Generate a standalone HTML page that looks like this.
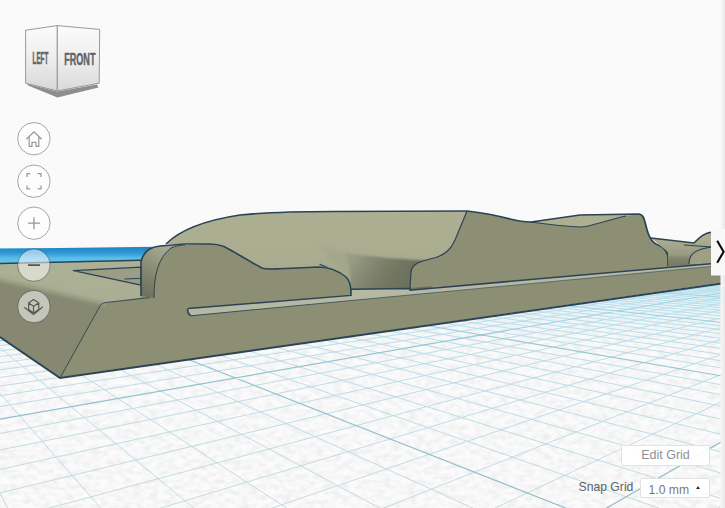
<!DOCTYPE html>
<html><head><meta charset="utf-8">
<style>
html,body{margin:0;padding:0;width:725px;height:508px;overflow:hidden;background:#fafafa;font-family:"Liberation Sans",sans-serif;}
#scene{position:absolute;left:0;top:0;}
.btn{position:absolute;background:rgba(255,255,255,0.92);border:1px solid #e3e3e3;border-radius:2px;color:#777c82;font-size:12.5px;box-sizing:border-box;white-space:nowrap;}
</style></head><body>
<svg id="scene" width="725" height="508" viewBox="0 0 725 508">
<defs>
<linearGradient id="bluestrip" gradientUnits="userSpaceOnUse" x1="0" y1="248" x2="0" y2="261">
<stop offset="0" stop-color="#2387c9"/><stop offset="0.3" stop-color="#2c92d1"/><stop offset="0.5" stop-color="#3aa2da"/><stop offset="0.75" stop-color="#58bbe7"/><stop offset="1" stop-color="#62c2eb"/>
</linearGradient>
<linearGradient id="topface" x1="0" y1="0" x2="0" y2="1"><stop offset="0" stop-color="#acb094"/><stop offset="1" stop-color="#aaae92"/></linearGradient>
<linearGradient id="leftface" gradientUnits="userSpaceOnUse" x1="52" y1="284" x2="49" y2="297"><stop offset="0" stop-color="#abaf93"/><stop offset="0.3" stop-color="#a8ac90"/><stop offset="0.6" stop-color="#989b82"/><stop offset="1" stop-color="#868872" stop-opacity="0"/></linearGradient>
<linearGradient id="rearhump" x1="0" y1="0" x2="0" y2="1"><stop offset="0" stop-color="#adaf93"/><stop offset="0.6" stop-color="#abad91"/><stop offset="1" stop-color="#a3a58a"/></linearGradient>
<linearGradient id="concave" gradientUnits="userSpaceOnUse" x1="352" y1="256" x2="402" y2="288"><stop offset="0" stop-color="#979a82" stop-opacity="0.7"/><stop offset="0.25" stop-color="#8a8d77"/><stop offset="0.65" stop-color="#767964"/><stop offset="1" stop-color="#6c705c"/></linearGradient>
<filter id="blur1" x="-10%" y="-10%" width="120%" height="120%"><feGaussianBlur stdDeviation="1.2"/></filter>
<filter id="blur3" x="-20%" y="-20%" width="140%" height="140%"><feGaussianBlur stdDeviation="2.5"/></filter>
<linearGradient id="channel" gradientUnits="userSpaceOnUse" x1="0" y1="238" x2="0" y2="265"><stop offset="0" stop-color="#adaf93"/><stop offset="0.3" stop-color="#a3a68b"/><stop offset="0.62" stop-color="#979a81"/><stop offset="0.78" stop-color="#80836d"/><stop offset="1" stop-color="#777a65"/></linearGradient>
<linearGradient id="bumpround" gradientUnits="userSpaceOnUse" x1="143" y1="292" x2="168" y2="250"><stop offset="0" stop-color="#6f735e"/><stop offset="0.45" stop-color="#868a73"/><stop offset="1" stop-color="#a6a98e"/></linearGradient>
<linearGradient id="cubeL" x1="0" y1="0" x2="0" y2="1"><stop offset="0" stop-color="#fbfbfb"/><stop offset="0.5" stop-color="#eeeeee"/><stop offset="1" stop-color="#d6d6d6"/></linearGradient>
<filter id="blur05" x="-10%" y="-30%" width="120%" height="160%"><feGaussianBlur stdDeviation="0.6"/></filter>
<linearGradient id="cubeF" x1="0" y1="0" x2="0" y2="1"><stop offset="0" stop-color="#fbfbfb"/><stop offset="0.5" stop-color="#efefef"/><stop offset="1" stop-color="#d9d9d9"/></linearGradient>
<linearGradient id="gminor" gradientUnits="userSpaceOnUse" x1="0" y1="270" x2="0" y2="508"><stop offset="0" stop-color="#9ad4ea"/><stop offset="0.35" stop-color="#b4d9e5"/><stop offset="1" stop-color="#c3d9df"/></linearGradient>
<linearGradient id="gmajor" gradientUnits="userSpaceOnUse" x1="0" y1="270" x2="0" y2="508"><stop offset="0" stop-color="#7cc4e0"/><stop offset="0.4" stop-color="#8cbfcc"/><stop offset="1" stop-color="#90b9c3"/></linearGradient>
<filter id="mottle" x="0" y="0" width="100%" height="100%" filterUnits="objectBoundingBox"><feTurbulence type="fractalNoise" baseFrequency="0.12 0.2" numOctaves="2" seed="7"/><feColorMatrix type="matrix" values="0 0 0 0 0  0 0 0 0 0  0 0 0 0 0  0.12 0 0 0 -0.045"/></filter>
<linearGradient id="panelshadow" x1="0" y1="0" x2="1" y2="0"><stop offset="0" stop-color="#10102a" stop-opacity="0"/><stop offset="1" stop-color="#10102a" stop-opacity="0.07"/></linearGradient>
<linearGradient id="stripbot" gradientUnits="userSpaceOnUse" x1="188" y1="0" x2="725" y2="0"><stop offset="0" stop-color="#2c4354" stop-opacity="0.95"/><stop offset="0.5" stop-color="#2c4354" stop-opacity="0.6"/><stop offset="1" stop-color="#2c4354" stop-opacity="0.45"/></linearGradient>
<linearGradient id="haze" x1="0" y1="0" x2="0" y2="1"><stop offset="0" stop-color="#b4e0f0" stop-opacity="0.55"/><stop offset="0.45" stop-color="#c4e6f2" stop-opacity="0.3"/><stop offset="1" stop-color="#c4e6f2" stop-opacity="0"/></linearGradient>
<linearGradient id="planefade" x1="0" y1="0" x2="0" y2="1"><stop offset="0" stop-color="#f7f7f7" stop-opacity="0.25"/><stop offset="0.55" stop-color="#f7f7f7" stop-opacity="0.05"/><stop offset="1" stop-color="#f7f7f7" stop-opacity="0"/></linearGradient>
<clipPath id="planeclip"><rect x="0" y="248" width="725" height="260"/></clipPath>
</defs>
<rect x="0" y="248" width="725" height="260" fill="#fbfbfb"/>
<rect x="0" y="248" width="725" height="260" fill="#000" filter="url(#mottle)"/>
<g clip-path="url(#planeclip)">
<path d="M53290.6 2256.2L1382.4 239.3M52483.1 2256.2L1376.9 239.2M51675.7 2256.2L1371.4 239.2M50868.2 2256.2L1365.9 239.2M50060.8 2256.2L1360.5 239.1M49253.3 2256.2L1355.2 239.1M48445.9 2256.2L1349.8 239.0M47638.4 2256.2L1344.5 239.0M46831.0 2256.2L1339.3 239.0M45216.1 2256.2L1328.9 238.9M44408.6 2256.2L1323.7 238.9M43601.2 2256.2L1318.6 238.8M42793.7 2256.2L1313.6 238.8M41986.3 2256.2L1308.5 238.7M41178.8 2256.2L1303.5 238.7M40371.4 2256.2L1298.5 238.7M39563.9 2256.2L1293.6 238.6M38756.5 2256.2L1288.7 238.6M37141.6 2256.2L1279.0 238.5M36334.1 2256.2L1274.2 238.5M35526.7 2256.2L1269.4 238.4M34719.2 2256.2L1264.7 238.4M33911.8 2256.2L1260.0 238.4M33104.3 2256.2L1255.3 238.3M32296.9 2256.2L1250.6 238.3M31489.4 2256.2L1246.0 238.3M30682.0 2256.2L1241.4 238.2M29067.1 2256.2L1232.4 238.2M28259.6 2256.2L1227.9 238.1M27452.2 2256.2L1223.4 238.1M26644.7 2256.2L1219.0 238.1M25837.3 2256.2L1214.5 238.0M25029.8 2256.2L1210.2 238.0M24222.3 2256.2L1205.8 238.0M23414.9 2256.2L1201.5 237.9M22607.4 2256.2L1197.2 237.9M20992.5 2256.2L1188.7 237.9M20185.1 2256.2L1184.5 237.8M19377.6 2256.2L1180.3 237.8M18570.2 2256.2L1176.1 237.8M17762.7 2256.2L1172.0 237.7M16955.3 2256.2L1167.9 237.7M16147.8 2256.2L1163.8 237.7M15340.4 2256.2L1159.7 237.6M14532.9 2256.2L1155.7 237.6M12918.0 2256.2L1147.7 237.5M12110.6 2256.2L1143.7 237.5M11303.1 2256.2L1139.8 237.5M10495.7 2256.2L1135.9 237.5M9688.2 2256.2L1132.0 237.4M8880.8 2256.2L1128.1 237.4M8073.3 2256.2L1124.3 237.4M7265.9 2256.2L1120.5 237.3M6458.4 2256.2L1116.7 237.3M4843.5 2256.2L1109.1 237.3M4036.1 2256.2L1105.4 237.2M3228.6 2256.2L1101.7 237.2M2421.2 2256.2L1098.0 237.2M1613.7 2256.2L1094.4 237.2M806.3 2256.2L1090.7 237.1M-1.2 2256.2L1087.1 237.1M-808.6 2256.2L1083.5 237.1M-1616.1 2256.2L1079.9 237.0M-3231.0 2256.2L1072.8 237.0M-4038.5 2256.2L1069.3 237.0M-4845.9 2256.2L1065.8 236.9M-5653.4 2256.2L1062.3 236.9M-6460.8 2256.2L1058.9 236.9M-7268.3 2256.2L1055.4 236.9M-8075.7 2256.2L1052.0 236.8M-8883.2 2256.2L1048.6 236.8M-9690.6 2256.2L1045.3 236.8M-11305.5 2256.2L1038.6 236.7M-12113.0 2256.2L1035.2 236.7M-12920.4 2256.2L1031.9 236.7M-13727.9 2256.2L1028.6 236.7M-14535.3 2256.2L1025.4 236.6M-15342.8 2256.2L1022.1 236.6M-16150.2 2256.2L1018.9 236.6M-16957.7 2256.2L1015.7 236.6M-17765.1 2256.2L1012.5 236.6M-19380.0 2256.2L1006.2 236.5M-20187.5 2256.2L1003.0 236.5M-20994.9 2256.2L999.9 236.5M-21802.4 2256.2L996.8 236.4M-22609.8 2256.2L993.7 236.4M-23417.3 2256.2L990.6 236.4M-24224.7 2256.2L987.6 236.4M-25032.2 2256.2L984.5 236.3M-25839.6 2256.2L981.5 236.3M-27454.5 2256.2L975.5 236.3M-28262.0 2256.2L972.5 236.3M-29069.4 2256.2L969.6 236.2M-29876.9 2256.2L966.6 236.2M-30684.4 2256.2L963.7 236.2M-31491.8 2256.2L960.8 236.2M-32299.3 2256.2L957.9 236.1M-33106.7 2256.2L955.0 236.1M-33914.2 2256.2L952.1 236.1M-35529.1 2256.2L946.4 236.1M-36336.5 2256.2L943.6 236.0M-37144.0 2256.2L940.8 236.0M-37951.4 2256.2L938.0 236.0M-38758.9 2256.2L935.2 236.0M-39566.3 2256.2L932.4 236.0M-40373.8 2256.2L929.7 235.9M-41181.2 2256.2L926.9 235.9M-41988.7 2256.2L924.2 235.9M-43603.6 2256.2L918.8 235.9M-44411.0 2256.2L916.1 235.8M-45218.5 2256.2L913.5 235.8M-46025.9 2256.2L910.8 235.8M-46833.4 2256.2L908.2 235.8M-47640.8 2256.2L905.5 235.8M-48448.3 2256.2L902.9 235.7M-49255.7 2256.2L900.3 235.7M-50063.2 2256.2L897.7 235.7M-51678.1 2256.2L892.6 235.7M-52485.5 2256.2L890.0 235.6M-53293.0 2256.2L887.5 235.6M-54100.4 2256.2L884.9 235.6M-54907.9 2256.2L882.4 235.6M-55715.3 2256.2L879.9 235.6M-56522.8 2256.2L877.4 235.6M-57330.2 2256.2L875.0 235.5M-58137.7 2256.2L872.5 235.5M-59752.6 2256.2L867.6 235.5M-60560.1 2256.2L865.2 235.5M-61367.5 2256.2L862.7 235.4M-62175.0 2256.2L860.3 235.4M-62982.4 2256.2L857.9 235.4M-63789.9 2256.2L855.5 235.4M-64597.3 2256.2L853.2 235.4M-65404.8 2256.2L850.8 235.4M-66212.2 2256.2L848.5 235.3M-67827.1 2256.2L843.8 235.3M-68634.6 2256.2L841.5 235.3M-69442.0 2256.2L839.2 235.3M-70249.5 2256.2L836.9 235.3M-71056.9 2256.2L834.6 235.2M-71864.4 2256.2L832.3 235.2M-72671.8 2256.2L830.0 235.2M-73479.3 2256.2L827.8 235.2M-74286.7 2256.2L825.5 235.2M-70869.4 2123.6L821.1 235.1M-44070.8 1405.3L818.9 235.1M-32000.3 1081.8L816.6 235.1M-25133.7 897.8L814.5 235.1M-20702.3 779.0L812.3 235.1M-17605.9 696.0L810.1 235.1M-15320.2 634.7L807.9 235.0M-13563.6 587.7L805.8 235.0M-12171.5 550.3L803.6 235.0M-10105.0 495.0L799.4 235.0M-9316.9 473.8L797.3 235.0M-8644.5 455.8L795.2 234.9M-8063.9 440.3L793.1 234.9M-7557.5 426.7L791.0 234.9M-7112.0 414.7L788.9 234.9M-6717.1 404.2L786.8 234.9M-6364.5 394.7L784.8 234.9M-6047.8 386.2L782.7 234.9M-5502.2 371.6L778.6 234.8M-5265.6 365.2L776.6 234.8M-5049.0 359.4L774.6 234.8M-4849.9 354.1L772.6 234.8M-4666.4 349.2L770.6 234.8M-4496.7 344.6L768.6 234.7M-4339.2 340.4L766.6 234.7M-4192.8 336.5L764.7 234.7M-4056.2 332.8L762.7 234.7M-3809.0 326.2L758.8 234.7M-3696.7 323.2L756.9 234.7M-3591.1 320.4L754.9 234.6M-3491.7 317.7L753.0 234.6M-3397.8 315.2L751.1 234.6M-3309.0 312.8L749.2 234.6M-3224.9 310.6L747.3 234.6M-3145.2 308.4L745.4 234.6M-3069.5 306.4L743.5 234.6M-2929.0 302.6L739.8 234.5M-2863.8 300.9L737.9 234.5M-2801.5 299.2L736.1 234.5M-2741.9 297.6L734.2 234.5M-2685.0 296.1L732.4 234.5M-2630.6 294.6L730.6 234.5M-2578.4 293.2L728.7 234.5M-2528.4 291.9L726.9 234.4M-2480.4 290.6L725.1 234.4M-2389.9 288.2L721.5 234.4M-2347.3 287.0L719.8 234.4M-2306.2 285.9L718.0 234.4M-2266.7 284.9L716.2 234.4M-2228.5 283.8L714.5 234.3M-2191.7 282.9L712.7 234.3M-2156.2 281.9L711.0 234.3M-2121.9 281.0L709.2 234.3M-2088.8 280.1L707.5 234.3M-2025.7 278.4L704.1 234.3M-1995.7 277.6L702.3 234.3M-1966.6 276.8L700.6 234.2M-1938.4 276.1L698.9 234.2M-1911.1 275.3L697.3 234.2M-1884.6 274.6L695.6 234.2M-1858.9 273.9L693.9 234.2M-1833.9 273.3L692.2 234.2M-1809.7 272.6L690.6 234.2M-1763.2 271.4L687.3 234.1M-1740.9 270.8L685.6 234.1M-1719.2 270.2L684.0 234.1M-1698.1 269.6L682.3 234.1M-1677.6 269.1L680.7 234.1M-1657.6 268.5L679.1 234.1M-1638.1 268.0L677.5 234.1M-1619.1 267.5L675.9 234.1M-1600.6 267.0L674.3 234.1M-1565.0 266.1L671.1 234.0M-1547.8 265.6L669.5 234.0M-1531.0 265.1L667.9 234.0M-1514.6 264.7L666.4 234.0M-1498.6 264.3L664.8 234.0M-1483.0 263.9L663.3 234.0M-1467.8 263.5L661.7 234.0M-1452.8 263.1L660.2 233.9M-1438.2 262.7L658.6 233.9M-1410.0 261.9L655.6 233.9M-1396.4 261.5L654.0 233.9M-1383.0 261.2L652.5 233.9M-1369.9 260.8L651.0 233.9M-1357.1 260.5L649.5 233.9M-1344.6 260.2L648.0 233.9M-1332.3 259.8L646.5 233.8M-1320.2 259.5L645.0 233.8M-1308.5 259.2L643.6 233.8M-1285.6 258.6L640.6 233.8M-1274.4 258.3L639.2 233.8M-1263.5 258.0L637.7 233.8M-1252.9 257.7L636.2 233.8M-1242.4 257.4L634.8 233.8M-1232.1 257.1L633.3 233.8M-1222.0 256.9L631.9 233.7M-1212.1 256.6L630.5 233.7M-1202.3 256.3L629.0 233.7M-1183.4 255.8L626.2 233.7M-1174.2 255.6L624.8 233.7M-1165.1 255.3L623.4 233.7M-1156.2 255.1L622.0 233.7M-1147.5 254.9L620.6 233.7M-1138.9 254.6L619.2 233.6M-1130.4 254.4L617.8 233.6M-1122.1 254.2L616.4 233.6M-1114.0 254.0L615.1 233.6M-1098.0 253.5L612.3 233.6M-1090.3 253.3L611.0 233.6M-1082.6 253.1L609.6 233.6M-1075.1 252.9L608.3 233.6M-1067.7 252.7L606.9 233.6M-1060.4 252.5L605.6 233.5M-1053.2 252.3L604.2 233.5M-1046.2 252.2L602.9 233.5M-1039.2 252.0L601.6 233.5M-1025.6 251.6L598.9 233.5M-1019.0 251.4L597.6 233.5M-1012.4 251.3L596.3 233.5M-1006.0 251.1L595.0 233.5M-999.7 250.9L593.7 233.5M-993.4 250.7L592.4 233.4M-987.2 250.6L591.1 233.4M-981.2 250.4L589.8 233.4M-975.2 250.3L588.5 233.4M-963.5 249.9L586.0 233.4M-957.7 249.8L584.7 233.4M-952.1 249.6L583.5 233.4M-946.5 249.5L582.2 233.4M-941.0 249.3L581.0 233.4M-935.5 249.2L579.7 233.4M-930.2 249.0L578.5 233.3M-924.9 248.9L577.2 233.3M-919.7 248.8L576.0 233.3M-909.5 248.5L573.5 233.3M-904.5 248.4L572.3 233.3M-899.5 248.2L571.1 233.3M-894.6 248.1L569.8 233.3M-889.8 248.0L568.6 233.3M-885.1 247.8L567.4 233.3M-880.4 247.7L566.2 233.3M-875.7 247.6L565.0 233.2M-871.2 247.5L563.8 233.2M-862.2 247.2L561.4 233.2M-857.8 247.1L560.3 233.2M-853.4 247.0L559.1 233.2M-849.1 246.9L557.9 233.2M-844.9 246.8L556.7 233.2M-840.7 246.6L555.6 233.2M-836.5 246.5L554.4 233.2M-832.4 246.4L553.2 233.2M-828.4 246.3L552.1 233.1M-820.4 246.1L549.8 233.1M-816.5 246.0L548.6 233.1M-812.6 245.9L547.5 233.1M-808.8 245.8L546.3 233.1M-805.0 245.7L545.2 233.1M-801.3 245.6L544.1 233.1M-797.6 245.5L543.0 233.1M-793.9 245.4L541.8 233.1M-790.3 245.3L540.7 233.1M-783.2 245.1L538.5 233.0M-779.7 245.0L537.4 233.0M-776.3 244.9L536.3 233.0M-772.8 244.8L535.2 233.0M-769.5 244.7L534.1 233.0M-766.1 244.6L533.0 233.0M-762.8 244.6L531.9 233.0M-759.5 244.5L530.8 233.0M-756.3 244.4L529.7 233.0M-749.9 244.2L527.6 233.0M-746.8 244.1L526.5 233.0M-743.7 244.0L525.4 233.0M-740.6 244.0L524.3 232.9M-737.5 243.9L523.3 232.9M-734.5 243.8L522.2 232.9M-731.5 243.7L521.2 232.9M-728.6 243.6L520.1 232.9M-725.7 243.6L519.1 232.9M-719.9 243.4L517.0 232.9M-717.1 243.3L515.9 232.9M-714.3 243.3L514.9 232.9M-711.5 243.2L513.9 232.9M-708.7 243.1L512.8 232.9M-706.0 243.0L511.8 232.9M-703.3 243.0L510.8 232.8M-700.6 242.9L509.8 232.8M-698.0 242.8L508.7 232.8M-692.7 242.7L506.7 232.8M-690.2 242.6L505.7 232.8M-687.6 242.5L504.7 232.8M-685.1 242.5L503.7 232.8M-682.6 242.4L502.7 232.8M-680.1 242.3L501.7 232.8M-677.6 242.3L500.7 232.8M-675.2 242.2L499.7 232.8M-672.8 242.1L498.7 232.8M-668.0 242.0L496.8 232.7M-665.7 242.0L495.8 232.7M-663.4 241.9L494.8 232.7M-661.1 241.8L493.8 232.7M-658.8 241.8L492.9 232.7M-656.5 241.7L491.9 232.7M-654.2 241.6L490.9 232.7M-652.0 241.6L490.0 232.7M-649.8 241.5L489.0 232.7M-645.5 241.4L487.1 232.7M-643.3 241.4L486.2 232.7M-641.2 241.3L485.2 232.7M-639.1 241.2L484.3 232.6M-637.0 241.2L483.3 232.6M-634.9 241.1L482.4 232.6M-632.8 241.1L481.5 232.6M-630.8 241.0L480.5 232.6M-628.7 241.0L479.6 232.6M-624.7 240.9L477.8 232.6M-622.8 240.8L476.8 232.6M-620.8 240.8L475.9 232.6M-618.9 240.7L475.0 232.6M-616.9 240.6L474.1 232.6M-615.0 240.6L473.2 232.6M-613.1 240.5L472.3 232.6M-611.2 240.5L471.4 232.6M-609.4 240.4L470.5 232.5M-605.7 240.3L468.7 232.5M-603.9 240.3L467.8 232.5M-602.0 240.3L466.9 232.5M-600.3 240.2L466.0 232.5M-598.5 240.2L465.1 232.5M-596.7 240.1L464.2 232.5M-595.0 240.1L463.3 232.5M-593.2 240.0L462.5 232.5M-591.5 240.0L461.6 232.5M-588.1 239.9L459.8 232.5M-586.4 239.8L459.0 232.5M-584.7 239.8L458.1 232.5M-583.1 239.7L457.2 232.4M-581.4 239.7L456.4 232.4M-579.8 239.7L455.5 232.4M-578.1 239.6L454.7 232.4M-576.5 239.6L453.8 232.4M-574.9 239.5L453.0 232.4M-571.8 239.4L451.3 232.4M-570.2 239.4L450.4 232.4M-568.6 239.4L449.6 232.4M-567.1 239.3L448.7 232.4M-565.6 239.3L447.9 232.4M-564.0 239.2L447.1 232.4M-562.5 239.2L446.2 232.4M-561.0 239.2L445.4 232.4M-559.6 239.1L444.6 232.4M-556.6 239.0L442.9 232.3M-555.2 239.0L442.1 232.3M-553.7 239.0L441.3 232.3M-552.3 238.9L440.5 232.3M-550.8 238.9L439.7 232.3M-549.4 238.8L438.9 232.3M-548.0 238.8L438.0 232.3M-546.6 238.8L437.2 232.3M-545.2 238.7L436.4 232.3M-542.5 238.7L434.8 232.3M-541.1 238.6L434.0 232.3M-539.8 238.6L433.2 232.3M-538.4 238.5L432.4 232.3M-537.1 238.5L431.7 232.3M-535.8 238.5L430.9 232.3M-534.5 238.4L430.1 232.2M-533.2 238.4L429.3 232.2M-531.9 238.4L428.5 232.2M-529.3 238.3L426.9 232.2M-528.0 238.3L426.2 232.2M-526.8 238.2L425.4 232.2M-525.5 238.2L424.6 232.2M-524.3 238.2L423.9 232.2M-523.1 238.1L423.1 232.2M-521.8 238.1L422.3 232.2M-520.6 238.1L421.6 232.2M-519.4 238.0L420.8 232.2M-517.0 238.0L419.3 232.2M-515.8 237.9L418.5 232.2M-514.6 237.9L417.8 232.2M-513.4 237.9L417.0 232.2M-512.3 237.8L416.3 232.1M-511.1 237.8L415.5 232.1M-510.0 237.8L414.8 232.1M-508.8 237.8L414.0 232.1M-507.7 237.7L413.3 232.1M-75141.7 2256.2L-502.4 237.7M-74468.2 2256.2L-498.3 237.6M-73794.7 2256.2L-494.2 237.6M-73121.2 2256.2L-490.1 237.6M-72447.8 2256.2L-486.0 237.6M-71774.3 2256.2L-482.0 237.5M-71100.8 2256.2L-478.0 237.5M-70427.3 2256.2L-474.0 237.5M-69753.8 2256.2L-470.0 237.5M-68406.9 2256.2L-462.1 237.4M-67733.4 2256.2L-458.2 237.4M-67059.9 2256.2L-454.3 237.4M-66386.5 2256.2L-450.4 237.3M-65713.0 2256.2L-446.5 237.3M-65039.5 2256.2L-442.7 237.3M-64366.0 2256.2L-438.8 237.3M-63692.6 2256.2L-435.0 237.3M-63019.1 2256.2L-431.3 237.2M-61672.1 2256.2L-423.7 237.2M-60998.7 2256.2L-420.0 237.2M-60325.2 2256.2L-416.3 237.1M-59651.7 2256.2L-412.6 237.1M-58978.2 2256.2L-408.9 237.1M-58304.8 2256.2L-405.3 237.1M-57631.3 2256.2L-401.6 237.1M-56957.8 2256.2L-398.0 237.0M-56284.3 2256.2L-394.4 237.0M-54937.4 2256.2L-387.3 237.0M-54263.9 2256.2L-383.7 236.9M-53590.4 2256.2L-380.2 236.9M-52917.0 2256.2L-376.7 236.9M-52243.5 2256.2L-373.1 236.9M-51570.0 2256.2L-369.7 236.9M-50896.5 2256.2L-366.2 236.8M-50223.1 2256.2L-362.7 236.8M-49549.6 2256.2L-359.3 236.8M-48202.6 2256.2L-352.5 236.8M-47529.2 2256.2L-349.1 236.7M-46855.7 2256.2L-345.7 236.7M-46182.2 2256.2L-342.4 236.7M-45508.7 2256.2L-339.0 236.7M-44835.3 2256.2L-335.7 236.7M-44161.8 2256.2L-332.4 236.6M-43488.3 2256.2L-329.1 236.6M-42814.8 2256.2L-325.8 236.6M-41467.9 2256.2L-319.3 236.6M-40794.4 2256.2L-316.1 236.5M-40120.9 2256.2L-312.9 236.5M-39447.5 2256.2L-309.7 236.5M-38774.0 2256.2L-306.5 236.5M-38100.5 2256.2L-303.3 236.5M-37427.0 2256.2L-300.1 236.4M-36753.6 2256.2L-297.0 236.4M-36080.1 2256.2L-293.8 236.4M-34733.1 2256.2L-287.6 236.4M-34059.6 2256.2L-284.5 236.3M-33386.2 2256.2L-281.5 236.3M-32712.7 2256.2L-278.4 236.3M-32039.2 2256.2L-275.3 236.3M-31365.7 2256.2L-272.3 236.3M-30692.3 2256.2L-269.3 236.3M-30018.8 2256.2L-266.3 236.2M-29345.3 2256.2L-263.3 236.2M-27998.4 2256.2L-257.3 236.2M-27324.9 2256.2L-254.4 236.2M-26651.4 2256.2L-251.4 236.1M-25977.9 2256.2L-248.5 236.1M-25304.5 2256.2L-245.6 236.1M-24631.0 2256.2L-242.7 236.1M-23957.5 2256.2L-239.8 236.1M-23284.0 2256.2L-236.9 236.1M-22610.6 2256.2L-234.0 236.0M-21263.6 2256.2L-228.3 236.0M-20590.1 2256.2L-225.5 236.0M-19916.7 2256.2L-222.7 236.0M-19243.2 2256.2L-219.9 236.0M-18569.7 2256.2L-217.1 235.9M-17896.2 2256.2L-214.3 235.9M-17222.8 2256.2L-211.5 235.9M-16549.3 2256.2L-208.8 235.9M-15875.8 2256.2L-206.0 235.9M-14528.9 2256.2L-200.6 235.8M-13855.4 2256.2L-197.9 235.8M-13181.9 2256.2L-195.2 235.8M-12508.4 2256.2L-192.5 235.8M-11835.0 2256.2L-189.8 235.8M-11161.5 2256.2L-187.1 235.8M-10488.0 2256.2L-184.5 235.7M-9814.5 2256.2L-181.8 235.7M-9141.1 2256.2L-179.2 235.7M-7794.1 2256.2L-173.9 235.7M-7120.6 2256.2L-171.3 235.7M-6447.2 2256.2L-168.7 235.6M-5773.7 2256.2L-166.2 235.6M-5100.2 2256.2L-163.6 235.6M-4426.7 2256.2L-161.0 235.6M-3753.3 2256.2L-158.5 235.6M-3079.8 2256.2L-155.9 235.6M-2406.3 2256.2L-153.4 235.5M-1059.3 2256.2L-148.4 235.5M-385.9 2256.2L-145.9 235.5M287.6 2256.2L-143.4 235.5M961.1 2256.2L-140.9 235.5M1634.6 2256.2L-138.5 235.5M2308.0 2256.2L-136.0 235.4M2981.5 2256.2L-133.5 235.4M3655.0 2256.2L-131.1 235.4M4328.5 2256.2L-128.7 235.4M5675.4 2256.2L-123.8 235.4M6348.9 2256.2L-121.4 235.4M7022.4 2256.2L-119.1 235.3M7695.8 2256.2L-116.7 235.3M8369.3 2256.2L-114.3 235.3M9042.8 2256.2L-111.9 235.3M9716.3 2256.2L-109.6 235.3M10389.7 2256.2L-107.2 235.3M11063.2 2256.2L-104.9 235.3M12410.2 2256.2L-100.3 235.2M13083.6 2256.2L-98.0 235.2M13757.1 2256.2L-95.7 235.2M14430.6 2256.2L-93.4 235.2M15104.1 2256.2L-91.1 235.2M15777.5 2256.2L-88.8 235.2M16451.0 2256.2L-86.5 235.1M17124.5 2256.2L-84.3 235.1M17798.0 2256.2L-82.0 235.1M19144.9 2256.2L-77.6 235.1M19818.4 2256.2L-75.3 235.1M20491.9 2256.2L-73.1 235.1M21165.3 2256.2L-70.9 235.0M21838.8 2256.2L-68.7 235.0M22512.3 2256.2L-66.5 235.0M23185.8 2256.2L-64.4 235.0M23859.2 2256.2L-62.2 235.0M24532.7 2256.2L-60.0 235.0M25879.7 2256.2L-55.7 235.0M26553.1 2256.2L-53.6 234.9M27226.6 2256.2L-51.5 234.9M27900.1 2256.2L-49.3 234.9M28573.6 2256.2L-47.2 234.9M29247.0 2256.2L-45.1 234.9M29920.5 2256.2L-43.0 234.9M30594.0 2256.2L-40.9 234.9M31267.5 2256.2L-38.8 234.9M32614.4 2256.2L-34.7 234.8M33287.9 2256.2L-32.6 234.8M33961.4 2256.2L-30.6 234.8M34634.9 2256.2L-28.5 234.8M35308.3 2256.2L-26.5 234.8M35981.8 2256.2L-24.4 234.8M36655.3 2256.2L-22.4 234.8M37328.8 2256.2L-20.4 234.7M38002.2 2256.2L-18.4 234.7M39349.2 2256.2L-14.4 234.7M40022.7 2256.2L-12.4 234.7M40696.1 2256.2L-10.4 234.7M41369.6 2256.2L-8.5 234.7M42043.1 2256.2L-6.5 234.7M42716.6 2256.2L-4.5 234.6M43390.0 2256.2L-2.6 234.6M44063.5 2256.2L-0.6 234.6M44737.0 2256.2L1.3 234.6M46083.9 2256.2L5.2 234.6M46757.4 2256.2L7.1 234.6M47430.9 2256.2L9.0 234.6M48104.4 2256.2L10.9 234.6M48777.8 2256.2L12.8 234.5M49451.3 2256.2L14.7 234.5M50124.8 2256.2L16.6 234.5M50798.3 2256.2L18.5 234.5M51471.7 2256.2L20.3 234.5M52818.7 2256.2L24.1 234.5M53492.2 2256.2L25.9 234.5M51351.9 2151.1L27.8 234.5M34239.8 1496.3L29.6 234.4M25820.5 1174.2L31.4 234.4M20811.8 982.5L33.3 234.4M17490.3 855.5L35.1 234.4M15126.5 765.0L36.9 234.4M13358.2 697.3L38.7 234.4M10889.5 602.9L42.3 234.4M9993.7 568.6L44.1 234.4M9247.9 540.1L45.9 234.3M8617.5 516.0L47.7 234.3M8077.6 495.3L49.4 234.3M7609.9 477.4L51.2 234.3M7200.9 461.7L53.0 234.3M6840.2 447.9L54.7 234.3M6519.8 435.7L56.5 234.3M5975.3 414.9L59.9 234.3M5742.0 405.9L61.7 234.2M5530.1 397.8L63.4 234.2M5336.6 390.4L65.1 234.2M5159.3 383.6L66.8 234.2M4996.2 377.4L68.5 234.2M4845.6 371.6L70.2 234.2M4706.3 366.3L71.9 234.2M4576.9 361.3L73.6 234.2M4344.1 352.4L77.0 234.2M4239.0 348.4L78.7 234.1M4140.4 344.6L80.3 234.1M4047.9 341.1L82.0 234.1M3960.8 337.8L83.6 234.1M3878.7 334.6L85.3 234.1M3801.1 331.7L86.9 234.1M3727.8 328.9L88.6 234.1M3658.3 326.2L90.2 234.1M3529.8 321.3L93.5 234.1M3470.2 319.0L95.1 234.0M3413.5 316.8L96.7 234.0M3359.5 314.8L98.3 234.0M3307.9 312.8L99.9 234.0M3258.5 310.9L101.5 234.0M3211.4 309.1L103.1 234.0M3166.2 307.4L104.7 234.0M3123.0 305.7L106.3 234.0M3041.6 302.6L109.4 234.0M3003.3 301.1L111.0 233.9M2966.5 299.7L112.6 233.9M2931.1 298.4L114.1 233.9M2897.0 297.1L115.7 233.9M2864.2 295.8L117.2 233.9M2832.5 294.6L118.8 233.9M2801.9 293.4L120.3 233.9M2772.4 292.3L121.8 233.9M2716.3 290.2L124.9 233.9M2689.7 289.1L126.4 233.9M2663.9 288.1L127.9 233.8M2638.9 287.2L129.4 233.8M2614.7 286.3L130.9 233.8M2591.3 285.4L132.4 233.8M2568.5 284.5L133.9 233.8M2546.5 283.7L135.4 233.8M2525.1 282.8L136.9 233.8M2484.1 281.3L139.9 233.8M2464.5 280.5L141.4 233.8M2445.4 279.8L142.8 233.8M2426.8 279.1L144.3 233.7M2408.8 278.4L145.7 233.7M2391.2 277.7L147.2 233.7M2374.1 277.1L148.7 233.7M2357.4 276.4L150.1 233.7M2341.2 275.8L151.5 233.7M2309.9 274.6L154.4 233.7M2294.9 274.0L155.8 233.7M2280.2 273.5L157.3 233.7M2265.9 272.9L158.7 233.7M2251.9 272.4L160.1 233.6M2238.2 271.9L161.5 233.6M2224.9 271.3L162.9 233.6M2211.9 270.9L164.3 233.6M2199.1 270.4L165.7 233.6M2174.5 269.4L168.5 233.6M2162.6 269.0L169.9 233.6M2151.0 268.5L171.3 233.6M2139.6 268.1L172.6 233.6M2128.4 267.7L174.0 233.6M2117.5 267.2L175.4 233.6M2106.8 266.8L176.8 233.5M2096.3 266.4L178.1 233.5M2086.1 266.0L179.5 233.5M2066.2 265.3L182.2 233.5M2056.5 264.9L183.5 233.5M2047.1 264.5L184.9 233.5M2037.8 264.2L186.2 233.5M2028.7 263.8L187.5 233.5M2019.8 263.5L188.9 233.5M2011.0 263.2L190.2 233.5M2002.4 262.8L191.5 233.5M1994.0 262.5L192.8 233.5M1977.6 261.9L195.4 233.4M1969.6 261.6L196.8 233.4M1961.8 261.3L198.1 233.4M1954.1 261.0L199.4 233.4M1946.5 260.7L200.6 233.4M1939.1 260.4L201.9 233.4M1931.8 260.1L203.2 233.4M1924.6 259.9L204.5 233.4M1917.5 259.6L205.8 233.4M1903.7 259.1L208.3 233.4M1897.0 258.8L209.6 233.3M1890.4 258.6L210.9 233.3M1883.9 258.3L212.1 233.3M1877.5 258.1L213.4 233.3M1871.3 257.8L214.6 233.3M1865.1 257.6L215.9 233.3M1859.0 257.3L217.1 233.3M1853.0 257.1L218.4 233.3M1841.3 256.7L220.9 233.3M1835.6 256.5L222.1 233.3M1829.9 256.2L223.3 233.3M1824.4 256.0L224.6 233.3M1818.9 255.8L225.8 233.3M1813.5 255.6L227.0 233.2M1808.2 255.4L228.2 233.2M1803.0 255.2L229.4 233.2M1797.8 255.0L230.6 233.2M1787.7 254.6L233.0 233.2M1782.8 254.4L234.2 233.2M1777.9 254.2L235.4 233.2M1773.1 254.1L236.6 233.2M1768.4 253.9L237.8 233.2M1763.7 253.7L239.0 233.2M1759.1 253.5L240.2 233.2M1754.6 253.4L241.4 233.2M1750.1 253.2L242.5 233.1M1741.3 252.8L244.9 233.1M1737.0 252.7L246.0 233.1M1732.8 252.5L247.2 233.1M1728.6 252.4L248.4 233.1M1724.5 252.2L249.5 233.1M1720.4 252.0L250.7 233.1M1716.3 251.9L251.8 233.1M1712.4 251.7L253.0 233.1M1708.4 251.6L254.1 233.1M1700.7 251.3L256.4 233.1M1696.9 251.1L257.5 233.1M1693.2 251.0L258.7 233.1M1689.5 250.9L259.8 233.0M1685.9 250.7L260.9 233.0M1682.3 250.6L262.0 233.0M1678.7 250.4L263.2 233.0M1675.2 250.3L264.3 233.0M1671.7 250.2L265.4 233.0M1664.9 249.9L267.6 233.0M1661.6 249.8L268.7 233.0M1658.2 249.7L269.8 233.0M1655.0 249.5L270.9 233.0M1651.7 249.4L272.0 233.0M1648.5 249.3L273.1 233.0M1645.4 249.2L274.2 233.0M1642.2 249.1L275.3 233.0M1639.2 248.9L276.4 232.9M1633.1 248.7L278.5 232.9M1630.1 248.6L279.6 232.9M1627.1 248.5L280.7 232.9M1624.2 248.4L281.7 232.9M1621.3 248.3L282.8 232.9M1618.4 248.1L283.9 232.9M1615.6 248.0L284.9 232.9M1612.8 247.9L286.0 232.9M1610.0 247.8L287.0 232.9M1604.6 247.6L289.2 232.9M1601.9 247.5L290.2 232.9M1599.2 247.4L291.2 232.9M1596.6 247.3L292.3 232.8M1594.0 247.2L293.3 232.8M1591.4 247.1L294.4 232.8M1588.9 247.0L295.4 232.8M1586.4 246.9L296.4 232.8M1583.9 246.8L297.5 232.8M1578.9 246.6L299.5 232.8M1576.5 246.5L300.5 232.8M1574.1 246.4L301.5 232.8M1571.7 246.4L302.6 232.8M1569.4 246.3L303.6 232.8M1567.1 246.2L304.6 232.8M1564.8 246.1L305.6 232.8M1562.5 246.0L306.6 232.8M1560.2 245.9L307.6 232.8M1555.8 245.7L309.6 232.7M1553.6 245.7L310.6 232.7M1551.4 245.6L311.6 232.7M1549.2 245.5L312.6 232.7M1547.1 245.4L313.6 232.7M1545.0 245.3L314.5 232.7M1542.9 245.3L315.5 232.7M1540.8 245.2L316.5 232.7M1538.7 245.1L317.5 232.7M1534.7 244.9L319.4 232.7M1532.7 244.9L320.4 232.7M1530.7 244.8L321.4 232.7M1528.7 244.7L322.3 232.7M1526.8 244.6L323.3 232.7M1524.8 244.6L324.3 232.7M1522.9 244.5L325.2 232.6M1521.0 244.4L326.2 232.6M1519.1 244.3L327.1 232.6M1515.4 244.2L329.0 232.6M1513.6 244.1L330.0 232.6M1511.8 244.1L330.9 232.6M1510.0 244.0L331.9 232.6M1508.2 243.9L332.8 232.6M1506.4 243.9L333.7 232.6M1504.6 243.8L334.7 232.6M1502.9 243.7L335.6 232.6M1501.2 243.7L336.5 232.6M1497.8 243.5L338.4 232.6M1496.1 243.5L339.3 232.6M1494.4 243.4L340.2 232.6M1492.8 243.3L341.1 232.6M1491.1 243.3L342.1 232.5M1489.5 243.2L343.0 232.5M1487.9 243.1L343.9 232.5M1486.3 243.1L344.8 232.5M1484.7 243.0L345.7 232.5M1481.5 242.9L347.5 232.5M1480.0 242.8L348.4 232.5M1478.4 242.8L349.3 232.5M1476.9 242.7L350.2 232.5M1475.4 242.7L351.1 232.5M1473.9 242.6L352.0 232.5M1472.4 242.6L352.9 232.5M1470.9 242.5L353.8 232.5M1469.5 242.4L354.7 232.5M1466.5 242.3L356.4 232.5M1465.1 242.3L357.3 232.5M1463.7 242.2L358.2 232.4M1462.3 242.2L359.1 232.4M1460.9 242.1L359.9 232.4M1459.5 242.1L360.8 232.4M1458.1 242.0L361.7 232.4M1456.7 242.0L362.5 232.4M1455.4 241.9L363.4 232.4M1452.7 241.8L365.1 232.4M1451.3 241.7L366.0 232.4M1450.0 241.7L366.8 232.4M1448.7 241.6L367.7 232.4M1447.4 241.6L368.5 232.4M1446.1 241.5L369.4 232.4M1444.8 241.5L370.2 232.4M1443.6 241.5L371.1 232.4M1442.3 241.4L371.9 232.4M1439.8 241.3L373.6 232.4M1438.5 241.3L374.5 232.3M1437.3 241.2L375.3 232.3M1436.1 241.2L376.1 232.3M1434.9 241.1L377.0 232.3M1433.7 241.1L377.8 232.3M1432.5 241.0L378.6 232.3M1431.3 241.0L379.5 232.3M1430.1 240.9L380.3 232.3M1427.8 240.8L381.9 232.3M1426.6 240.8L382.7 232.3M1425.5 240.8L383.6 232.3M1424.4 240.7L384.4 232.3M1423.2 240.7L385.2 232.3M1422.1 240.6L386.0 232.3M1421.0 240.6L386.8 232.3M1419.9 240.5L387.6 232.3M1418.8 240.5L388.4 232.3M1416.6 240.4L390.0 232.3M1415.5 240.4L390.8 232.3M1414.4 240.3L391.6 232.2M1413.4 240.3L392.4 232.2M1412.3 240.3L393.2 232.2M1411.3 240.2L394.0 232.2M1410.2 240.2L394.8 232.2M1409.2 240.1L395.6 232.2M1408.2 240.1L396.4 232.2M1406.1 240.0L398.0 232.2M1405.1 240.0L398.7 232.2M1404.1 239.9L399.5 232.2M1403.1 239.9L400.3 232.2M1402.1 239.9L401.1 232.2M1401.1 239.8L401.9 232.2M1400.2 239.8L402.6 232.2M1399.2 239.8L403.4 232.2M1398.2 239.7L404.2 232.2M1396.3 239.6L405.7 232.2M1395.4 239.6L406.5 232.2M1394.4 239.6L407.2 232.2M1393.5 239.5L408.0 232.1M1392.5 239.5L408.8 232.1M1391.6 239.5L409.5 232.1M1390.7 239.4L410.3 232.1M1389.8 239.4L411.0 232.1M1388.9 239.4L411.8 232.1" stroke="url(#gminor)" stroke-width="0.95" fill="none"/>
<path d="M54098.1 2256.2L1388.0 239.3M46023.5 2256.2L1334.1 238.9M37949.0 2256.2L1283.8 238.6M29874.5 2256.2L1236.9 238.2M21800.0 2256.2L1192.9 237.9M13725.5 2256.2L1151.7 237.6M5651.0 2256.2L1112.9 237.3M-2423.5 2256.2L1076.4 237.0M-10498.1 2256.2L1041.9 236.8M-18572.6 2256.2L1009.3 236.5M-26647.1 2256.2L978.5 236.3M-34721.6 2256.2L949.3 236.1M-42796.1 2256.2L921.5 235.9M-50870.6 2256.2L895.1 235.7M-58945.2 2256.2L870.0 235.5M-67019.7 2256.2L846.1 235.3M-75094.2 2256.2L823.3 235.2M-11041.1 520.1L801.5 235.0M-5761.8 378.5L780.7 234.8M-3928.6 329.4L760.7 234.7M-2997.6 304.5L741.6 234.6M-2434.2 289.4L723.3 234.4M-2056.7 279.2L705.8 234.3M-1786.1 272.0L688.9 234.2M-1582.6 266.5L672.7 234.0M-1424.0 262.3L657.1 233.9M-1296.9 258.9L642.1 233.8M-1192.8 256.1L627.6 233.7M-1105.9 253.8L613.7 233.6M-1032.4 251.8L600.2 233.5M-969.3 250.1L587.3 233.4M-914.6 248.6L574.7 233.3M-866.6 247.3L562.6 233.2M-824.4 246.2L550.9 233.1M-786.8 245.2L539.6 233.1M-753.1 244.3L528.6 233.0M-722.8 243.5L518.0 232.9M-695.3 242.8L507.7 232.8M-670.4 242.1L497.7 232.7M-647.6 241.5L488.1 232.7M-626.7 240.9L478.7 232.6M-607.5 240.4L469.6 232.5M-589.8 239.9L460.7 232.5M-573.3 239.5L452.1 232.4M-558.1 239.1L443.8 232.3M-543.9 238.7L435.6 232.3M-530.6 238.3L427.7 232.2M-518.2 238.0L420.0 232.2M-506.5 237.7L412.5 232.1M-75815.1 2256.2L-506.5 237.7M-69080.4 2256.2L-466.0 237.4M-62345.6 2256.2L-427.5 237.2M-55610.9 2256.2L-390.8 237.0M-48876.1 2256.2L-355.9 236.8M-42141.4 2256.2L-322.6 236.6M-35406.6 2256.2L-290.7 236.4M-28671.8 2256.2L-260.3 236.2M-21937.1 2256.2L-231.2 236.0M-15202.3 2256.2L-203.3 235.9M-8467.6 2256.2L-176.6 235.7M-1732.8 2256.2L-150.9 235.5M5001.9 2256.2L-126.3 235.4M11736.7 2256.2L-102.6 235.2M18471.4 2256.2L-79.8 235.1M25206.2 2256.2L-57.9 235.0M31941.0 2256.2L-36.8 234.8M38675.7 2256.2L-16.4 234.7M45410.5 2256.2L3.2 234.6M52145.2 2256.2L22.2 234.5M11985.7 644.8L40.5 234.4M6233.1 424.7L58.2 234.3M4456.5 356.7L75.3 234.2M3592.4 323.7L91.8 234.1M3081.5 304.1L107.9 234.0M2743.9 291.2L123.4 233.9M2504.3 282.0L138.4 233.8M2325.4 275.2L153.0 233.7M2186.7 269.9L167.1 233.6M2076.0 265.7L180.8 233.5M1985.7 262.2L194.1 233.4M1910.6 259.3L207.1 233.4M1847.1 256.9L219.6 233.3M1792.7 254.8L231.8 233.2M1745.7 253.0L243.7 233.1M1704.6 251.4L255.3 233.1M1668.3 250.1L266.5 233.0M1636.1 248.8L277.4 232.9M1607.3 247.7L288.1 232.9M1581.4 246.7L298.5 232.8M1558.0 245.8L308.6 232.7M1536.7 245.0L318.5 232.7M1517.3 244.3L328.1 232.6M1499.5 243.6L337.5 232.6M1483.1 243.0L346.6 232.5M1468.0 242.4L355.5 232.5M1454.0 241.9L364.3 232.4M1441.0 241.4L372.8 232.4M1429.0 240.9L381.1 232.3M1417.7 240.5L389.2 232.3M1407.1 240.1L397.2 232.2M1397.3 239.7L404.9 232.2M1388.0 239.3L412.5 232.1" stroke="url(#gmajor)" stroke-width="1.15" fill="none"/>
<rect x="0" y="248" width="725" height="260" fill="url(#planefade)"/>
<rect x="0" y="268" width="725" height="80" fill="url(#haze)"/>
</g>
<polygon points="0,248.8 175,246.6 175,266 0,266" fill="url(#bluestrip)"/>
<polygon points="0,263.5 141,260.3 725,247 725,282 60,378 0,337" fill="#8d8f75"/>
<polygon points="0,263.5 141,260.3 141,297.5 106,302.5 60,289 0,275" fill="url(#topface)"/>
<polygon points="0,275 60,289 106,302.5 100,306 60,378 0,337" fill="#868872"/>
<polygon points="0,272 60,286 106,300 106,312 60,300 0,288" fill="url(#leftface)"/>
<polygon points="73.4,270.7 141,267.2 141,285.2" fill="#9b9e84" stroke="#2c4354" stroke-width="1.3" stroke-linejoin="round"/>
<line x1="124.5" y1="279" x2="141" y2="278.3" stroke="#2c4354" stroke-width="1"/>
<path d="M166,244 C178,232 200,221 240,215 C270,212 300,211.5 333,211.5 L467,211 L455,240 C451,249 446,254 436,257.5 C425,260.5 412,262 411,272 L410,288 L351,289 L351,287 C350,281 340,272 331,267.5 L319,267 L280,268.8 L262,268 C250,262 235,252 224,246.5 L185,244 Z" fill="url(#rearhump)"/>
<path d="M318,244 C340,254 380,258 440,258 L440,292 L351,292 C350,280 345,268 330,260 Z" fill="#a0a389" opacity="0.6" filter="url(#blur3)"/>
<path d="M345,253 C365,256 395,259 432,261 L432,292 L351,292 C351,275 349,262 345,253 Z" fill="url(#concave)" filter="url(#blur1)"/>
<path d="M166,244 C178,232 200,221 240,215 C270,212 300,211.5 333,211.5 L467,211" fill="none" stroke="#2c4354" stroke-width="1.6"/>
<path d="M410,288 L411,272 C412,262 425,260.5 436,257.5 C446,254 451,249 455,240 L467,211 C480,212.5 495,215 510,219 C518,221 524,222 531,222 L580,215 L639,214 C643,214.5 644,218 645,222 C647,230 649,240 656,244 C664,247 668,251 668,258 L668,266 Z" fill="#8d8f75"/>
<path d="M531,222 L580,215 L640,214 L626,216 C600,222 590,227 580,227 C560,226 545,224 531,222 Z" fill="#adaf93"/>
<path d="M467,211 L455,240 C451,249 446,254 436,257.5 C425,260.5 412,262 411,272 L410,288" fill="none" stroke="#2c4354" stroke-width="1.2"/>
<path d="M467,211 C480,212.5 495,215 510,219 C518,221 524,222 531,222 L580,215 L639,214 C643,214.5 644,218 645,222 C647,230 649,240 656,244 C664,247 668,251 668,258 L668,266" fill="none" stroke="#2c4354" stroke-width="1.7"/>
<path d="M531,222 C545,224 560,226 580,227 C590,227 600,222 626,216" fill="none" stroke="#2c4354" stroke-width="1.1"/>
<path d="M651,238 L694,243 C700,237 704,233 712,232 L725,231 L725,264 L668,266 L668,252 Z" fill="url(#channel)"/>
<path d="M651,238 L694,243 C700,237 704,233 712,232" fill="none" stroke="#2c4354" stroke-width="1.5"/>
<path d="M689,264 C689,255 694,249 712,247 L725,247 L725,264 Z" fill="#9fa083"/>
<path d="M689,264 C689,255 694,249 712,247" fill="none" stroke="#2c4354" stroke-width="1.1"/>
<line x1="684" y1="245" x2="712" y2="247" stroke="#2c4354" stroke-width="1.2"/>
<path d="M154,298 C154,275 158,258 171,248 C176,246 180,245 185,245 L210,244 C216,244 220,245 224,246.5 C235,252 250,262 262,268 C266,269.5 272,269 280,268.8 L319,267 C331,267.5 340,272 346,277 C350,281 351,287 351,292 L351,299 Z" fill="#8d8f75"/>
<path d="M141,296 L141,262 C143,252 150,247 160,246 L185,244 C178,245 174,246 171,248 C158,258 154,275 154,298 Z" fill="url(#bumpround)"/>
<path d="M141,296 L141,262 C143,252 150,247 160,246 L185,244 L210,244 C216,244 220,245 224,246.5 C235,252 250,262 262,268 C266,269.5 272,269 280,268.8 L319,267 C331,267.5 340,272 346,277 C350,281 351,287 351,292 L351,299" fill="none" stroke="#2c4354" stroke-width="1.6"/>
<path d="M154,298 C154,275 158,258 171,248 C176,246 180,245 185,245" fill="none" stroke="#2c4354" stroke-width="1"/>
<path d="M319.5,264.3 L328,267.8" fill="none" stroke="#3a5a7a" stroke-width="1.6"/>
<polygon points="188,308.6 351,295.4 351,289.2 410,288.4 410,290.2 725,262.4 725,265.1 191.3,315.7" fill="#b5b9a4"/>
<polyline points="188,308.6 351,295.4 351,289.2 410,288.4 410,290.2 725,262.4" fill="none" stroke="#2c4354" stroke-width="1.5"/>
<polyline points="725,265.1 191.3,315.7" fill="none" stroke="url(#stripbot)" stroke-width="1.05"/>
<path d="M188,308.6 C186.5,310.5 188,315 191.3,315.7" fill="none" stroke="#2c4354" stroke-width="1.5"/>
<polyline points="0,337 60,378 725,283" fill="none" stroke="#2c4354" stroke-width="1.9"/>
<path d="M60,378 L100,306 C101,304 103,303 106,302.5 L150,297.6" fill="none" stroke="#2c4354" stroke-width="0.9"/>
<polyline points="0,263.5 141,260.3" fill="none" stroke="#2c4354" stroke-width="1.5"/>
<rect x="720.5" y="0" width="4.5" height="508" fill="#f9f9f9"/><rect x="720" y="0" width="5" height="508" fill="url(#panelshadow)"/>
<path d="M28,85.5 L57.5,97.5 L98.5,87.5 L97,84.5 L57.3,91.5 L27,84 Z" fill="#8e8e8e" filter="url(#blur05)"/>
<polygon points="25.6,30.2 57.3,25.6 57.3,90.9 25.6,83.2" fill="url(#cubeL)" stroke="#8f8f8f" stroke-width="0.9"/>
<polygon points="57.3,25.6 99.7,29.4 99.2,83.2 57.3,90.9" fill="url(#cubeF)" stroke="#8f8f8f" stroke-width="0.9"/>
<text x="0" y="0" font-family="Liberation Sans" font-weight="bold" font-size="15.6" fill="#5f6368" stroke="#5f6368" stroke-width="0.6" transform="translate(32.6,63.6) scale(0.40,1)">LEFT</text>
<text x="0" y="0" font-family="Liberation Sans" font-weight="bold" font-size="16.8" fill="#5f6368" stroke="#5f6368" stroke-width="0.5" transform="translate(64.2,65.2) scale(0.54,1)">FRONT</text>
<circle cx="33.9" cy="138.7" r="16.2" fill="rgba(255,255,255,0.52)" stroke="rgba(0,0,0,0.34)" stroke-width="1"/>
<circle cx="33.9" cy="181.2" r="16.2" fill="rgba(255,255,255,0.52)" stroke="rgba(0,0,0,0.34)" stroke-width="1"/>
<circle cx="33.9" cy="223.2" r="16.2" fill="rgba(255,255,255,0.52)" stroke="rgba(0,0,0,0.34)" stroke-width="1"/>
<circle cx="33.9" cy="265.1" r="16.2" fill="rgba(255,255,255,0.52)" stroke="rgba(0,0,0,0.34)" stroke-width="1"/>
<circle cx="33.9" cy="306.6" r="16.2" fill="rgba(255,255,255,0.52)" stroke="rgba(0,0,0,0.34)" stroke-width="1"/>
<path d="M26.3,139.2 L34,131.8 L41.7,139.2 M29.2,137 V146.3 H32 V142.3 H36 V146.3 H38.8 V137" fill="none" stroke="#979797" stroke-width="1.2" stroke-linejoin="miter"/>
<path d="M27,177 V173.7 H30.3 M37.7,173.7 H41 V177 M41,185.5 V188.8 H37.7 M30.3,188.8 H27 V185.5" fill="none" stroke="#979797" stroke-width="1.2"/>
<path d="M28,223.2 H40 M34,217.2 V229.2" fill="none" stroke="#979797" stroke-width="1.3"/>
<path d="M28,265.1 H40" fill="none" stroke="#45494b" stroke-width="1.6"/>
<path d="M33.5,299.6 L38.8,302.9 L38.8,309.4 L33.5,313 L28.6,309.4 L28.6,302.9 Z M28.6,302.9 L33.5,306.2 L38.8,302.9 M33.5,306.2 V313 M24.4,307.2 L33.5,314.6 L42.8,306.8" fill="none" stroke="#55574f" stroke-width="1.15" stroke-linejoin="round"/>
<rect x="711" y="229" width="14" height="46.5" fill="#f8f8f8"/>
<path d="M717.2,240.8 L723.6,251.8 L717.2,262.8" fill="none" stroke="#0a0a0a" stroke-width="2.1"/>
</svg>
<div class="btn" style="left:621px;top:445px;width:89px;height:21px;text-align:center;line-height:18.5px;color:#8d9197;">Edit Grid</div>
<div style="position:absolute;left:578.5px;top:480px;font-size:12.2px;color:#5d646d;white-space:nowrap;">Snap Grid</div>
<div class="btn" style="left:639.5px;top:478px;width:70.5px;height:20px;line-height:22px;padding-left:8px;font-size:12.2px;color:#74797f;">1.0 mm<span style="position:absolute;left:55px;top:7.3px;width:0;height:0;border-left:2.9px solid transparent;border-right:2.9px solid transparent;border-bottom:3.6px solid #2a2a2a;"></span></div>
</body></html>
